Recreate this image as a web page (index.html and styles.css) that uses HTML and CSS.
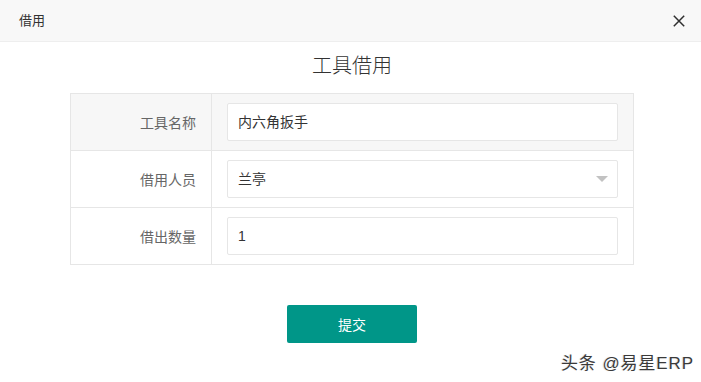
FILE: index.html
```html
<!DOCTYPE html>
<html lang="zh-CN">
<head>
<meta charset="utf-8">
<title>借用</title>
<link rel="stylesheet" href="styles.css">
</head>
<body>
<div class="dialog">
  <div class="dialog-header">
    <span class="dialog-title">借用</span>
    <span class="dialog-close">
      <svg width="12" height="12" viewBox="0 0 12 12"><path d="M0.8 0.8 L11.2 11.2 M11.2 0.8 L0.8 11.2" stroke="#2f2f2f" stroke-width="1.5" fill="none"/></svg>
    </span>
  </div>
  <div class="dialog-body">
    <h2 class="form-title">工具借用</h2>
    <table class="form-table">
      <tr class="row-hover">
        <td class="label">工具名称</td>
        <td class="field"><div class="input">内六角扳手</div></td>
      </tr>
      <tr>
        <td class="label">借用人员</td>
        <td class="field"><div class="input select">兰亭<i class="caret"></i></div></td>
      </tr>
      <tr>
        <td class="label">借出数量</td>
        <td class="field"><div class="input">1</div></td>
      </tr>
    </table>
    <div class="actions">
      <button class="btn">提交</button>
    </div>
  </div>
  <div class="watermark">头条 @易星ERP</div>
</div>
</body>
</html>
```
FILE: styles.css
```css
* { box-sizing: border-box; }
html, body { margin: 0; padding: 0; background: #fff; }
body {
  font-family: "Liberation Sans", "Noto Sans CJK SC", sans-serif;
  color: #333;
  font-size: 14px;
  width: 701px;
  height: 382px;
  overflow: hidden;
}
.dialog { position: relative; width: 701px; height: 382px; }
.dialog-header {
  height: 42px;
  background: #f8f8f8;
  border-bottom: 1px solid #eee;
  display: flex;
  align-items: center;
  justify-content: space-between;
  padding: 0 16px 0 19px;
}
.dialog-title { font-size: 13px; color: #333; line-height: 41px; }
.dialog-close { display: flex; width: 12px; height: 12px; }
.dialog-body {
  padding: 9px 67px 0 70px;
  display: flex;
  flex-direction: column;
}
.form-title {
  margin: 0 0 12px;
  font-size: 20px;
  font-weight: 300;
  line-height: 30px;
  text-align: center;
  color: #333;
}
.form-table {
  width: 564px;
  border-collapse: collapse;
}
.form-table td {
  border: 1px solid #e6e6e6;
  height: 57px;
  padding: 9px 15px;
}
.form-table tr.row-hover td { background: #f7f7f7; }
.form-table td.label {
  width: 141px;
  text-align: right;
  color: #666;
  font-size: 14px;
  padding-right: 15px;
}
.form-table td.field { padding: 9px 15px; }
.input {
  position: relative;
  height: 38px;
  line-height: 36px;
  border: 1px solid #e6e6e6;
  background: #fff;
  padding-left: 10px;
  color: #333;
  font-size: 14px;
  border-radius: 2px;
}
.caret {
  position: absolute;
  right: 9px;
  top: 50%;
  margin-top: -3px;
  width: 0;
  height: 0;
  border-left: 6px solid transparent;
  border-right: 6px solid transparent;
  border-top: 6px solid #c2c2c2;
}
.actions {
  display: flex;
  justify-content: center;
  margin-top: 40px;
}
.btn {
  width: 130px;
  height: 38px;
  border: none;
  border-radius: 2px;
  background: #009688;
  color: #fff;
  font-family: "Liberation Sans", "Noto Sans CJK SC", sans-serif;
  font-size: 14px;
  padding: 0;
}
.watermark {
  position: absolute;
  right: 7px;
  bottom: 8px;
  font-size: 17px;
  letter-spacing: 0.9px;
  color: #3a3a3a;
  text-shadow: 1px 1px 1px rgba(255,255,255,0.9), -1px 0 1px rgba(0,0,0,0.15);
}
```
